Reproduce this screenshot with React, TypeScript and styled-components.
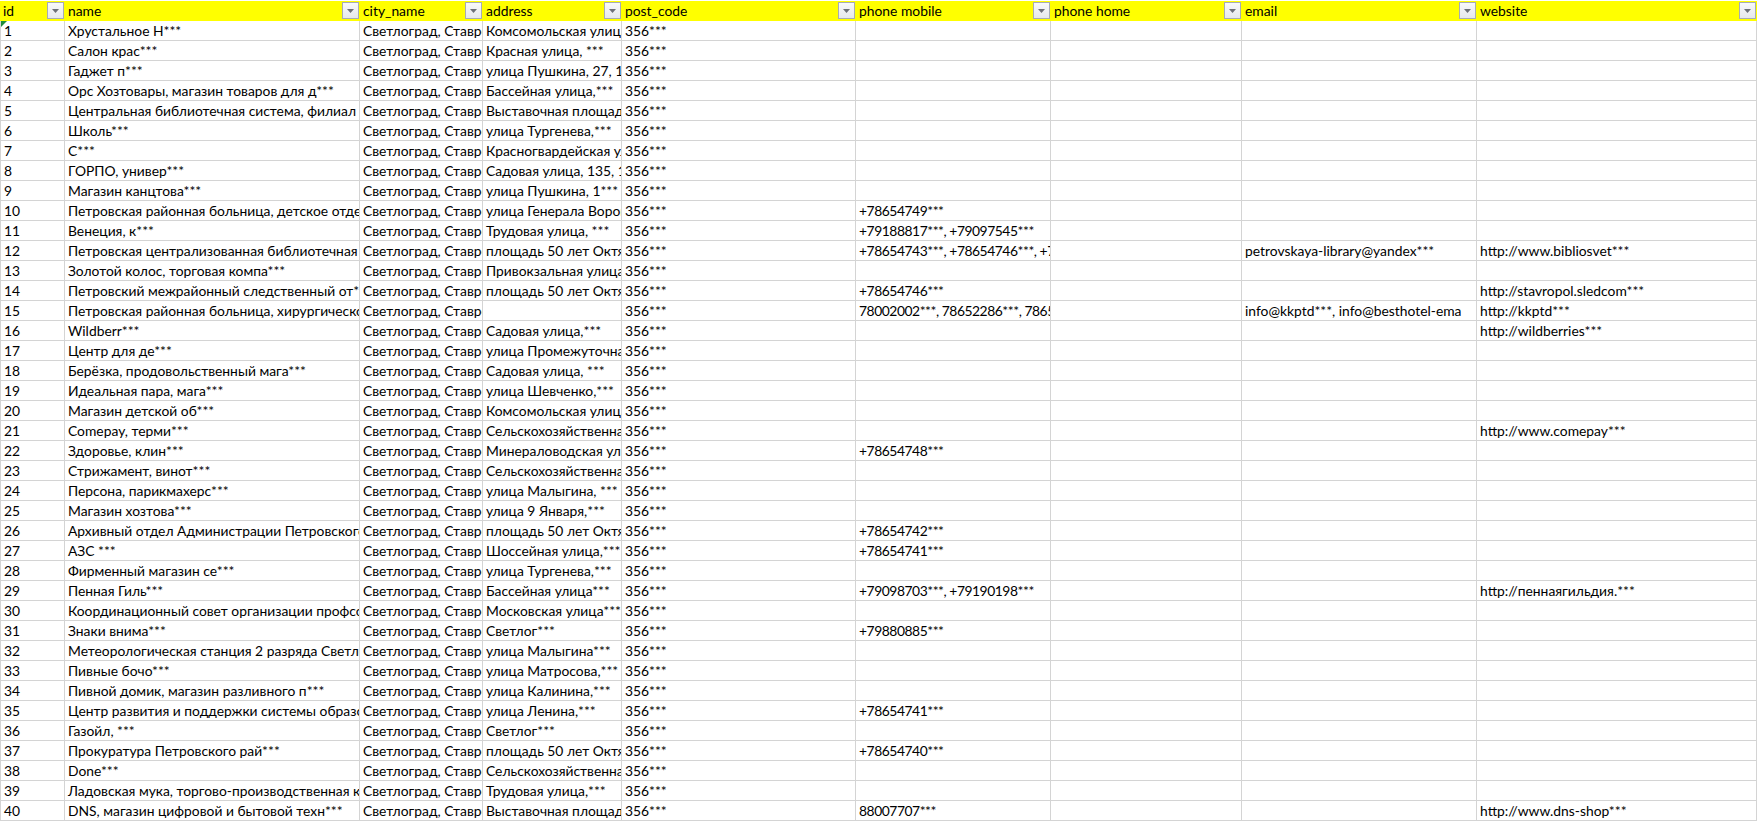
import React from 'react';
import styled, { createGlobalStyle } from 'styled-components';

const GlobalStyle = createGlobalStyle`
    html, body {
        margin: 0;
        padding: 0;
        background: #ffffff;
        overflow: hidden;
    }
`;

const columns = [
    { key: 'id', title: 'id', width: 65 },
    { key: 'name', title: 'name', width: 295 },
    { key: 'city', title: 'city_name', width: 123 },
    { key: 'address', title: 'address', width: 139 },
    { key: 'post', title: 'post_code', width: 234 },
    { key: 'mobile', title: 'phone mobile', width: 195 },
    { key: 'home', title: 'phone home', width: 191 },
    { key: 'email', title: 'email', width: 235 },
    { key: 'website', title: 'website', width: 280 },
];

const CITY = 'Светлоград, Ставропольский край';
const POST = '356***';

// name, address, mobile, email, website
const rows: string[][] = [
    ['Хрустальное Н***', 'Комсомольская улица'],
    ['Салон крас***', 'Красная улица, ***'],
    ['Гаджет п***', 'улица Пушкина, 27, 1'],
    ['Орс Хозтовары, магазин товаров для д***', 'Бассейная улица,***'],
    ['Центральная библиотечная система, филиал №***', 'Выставочная площадь'],
    ['Школь***', 'улица Тургенева,***'],
    ['С***', 'Красногвардейская улица'],
    ['ГОРПО, универ***', 'Садовая улица, 135, 1'],
    ['Магазин канцтова***', 'улица Пушкина, 1***'],
    ['Петровская районная больница, детское отделение', 'улица Генерала Воронова', '+78654749***'],
    ['Венеция, к***', 'Трудовая улица, ***', '+79188817***, +79097545***'],
    ['Петровская централизованная библиотечная система', 'площадь 50 лет Октября', '+78654743***, +78654746***, +78654747***', 'petrovskaya-library@yandex***', 'http://www.bibliosvet***'],
    ['Золотой колос, торговая компа***', 'Привокзальная улица'],
    ['Петровский межрайонный следственный от***', 'площадь 50 лет Октября', '+78654746***', '', 'http://stavropol.sledcom***'],
    ['Петровская районная больница, хирургическое отделение', '', '78002002***, 78652286***, 78652287***', 'info@kkptd***, info@besthotel-ema', 'http://kkptd***'],
    ['Wildberr***', 'Садовая улица,***', '', '', 'http://wildberries***'],
    ['Центр для де***', 'улица Промежуточная'],
    ['Берёзка, продовольственный мага***', 'Садовая улица, ***'],
    ['Идеальная пара, мага***', 'улица Шевченко,***'],
    ['Магазин детской об***', 'Комсомольская улица'],
    ['Comepay, терми***', 'Сельскохозяйственная', '', '', 'http://www.comepay***'],
    ['Здоровье, клин***', 'Минераловодская улица', '+78654748***'],
    ['Стрижамент, винот***', 'Сельскохозяйственная'],
    ['Персона, парикмахерс***', 'улица Малыгина, ***'],
    ['Магазин хозтова***', 'улица 9 Января,***'],
    ['Архивный отдел Администрации Петровского района', 'площадь 50 лет Октября', '+78654742***'],
    ['АЗС ***', 'Шоссейная улица,***', '+78654741***'],
    ['Фирменный магазин се***', 'улица Тургенева,***'],
    ['Пенная Гиль***', 'Бассейная улица***', '+79098703***, +79190198***', '', 'http://пеннаягильдия.***'],
    ['Координационный совет организации профсоюзов', 'Московская улица***'],
    ['Знаки внима***', 'Светлог***', '+79880885***'],
    ['Метеорологическая станция 2 разряда Светлоград', 'улица Малыгина***'],
    ['Пивные бочо***', 'улица Матросова,***'],
    ['Пивной домик, магазин разливного п***', 'улица Калинина,***'],
    ['Центр развития и поддержки системы образования', 'улица Ленина,***', '+78654741***'],
    ['Газойл, ***', 'Светлог***'],
    ['Прокуратура Петровского рай***', 'площадь 50 лет Октября', '+78654740***'],
    ['Done***', 'Сельскохозяйственная'],
    ['Ладовская мука, торгово-производственная компания', 'Трудовая улица,***'],
    ['DNS, магазин цифровой и бытовой техн***', 'Выставочная площадь', '88007707***', '', 'http://www.dns-shop***'],
];

const Sheet = styled.table`
    border-collapse: separate;
    border-spacing: 0;
    table-layout: fixed;
    width: 1757px;
    font-family: 'Lato', 'Open Sans', sans-serif;
    font-size: 13.85px;
    color: #000000;
`;

const HeadCell = styled.th`
    position: relative;
    height: 21px;
    padding: 1px 0 0;
    box-sizing: border-box;
    font-weight: 400;
    text-align: left;
    white-space: nowrap;
    overflow: hidden;
`;

const HeadLabel = styled.span`
    display: block;
    height: 20px;
    line-height: 20px;
    padding-left: 3px;
    background: #ffff00;
`;

const FilterButton = styled.span`
    position: absolute;
    top: 2px;
    right: 1px;
    width: 17px;
    height: 17px;
    box-sizing: border-box;
    border: 1px solid #a6abb5;
    background: linear-gradient(#f8f9fa, #e6e8ec);
    display: flex;
    align-items: center;
    justify-content: center;
`;

const Cell = styled.td<{ $digits?: boolean }>`
    position: relative;
    box-sizing: border-box;
    height: 20px;
    padding: 0 0 0 3px;
    border-right: 1px solid #d4d4d4;
    border-bottom: 1px solid #d4d4d4;
    white-space: nowrap;
    overflow: hidden;
    line-height: 19px;
    letter-spacing: ${({ $digits }) => ($digits ? '-0.45px' : 'normal')};

    &:first-child {
        border-left: 1px solid #d4d4d4;
    }
`;

const ErrorMark = styled.span`
    position: absolute;
    top: 0;
    left: 0;
    width: 0;
    height: 0;
    border-top: 6px solid #1e8b3c;
    border-right: 6px solid transparent;
`;

const App: React.FC = () => (
    <>
        <GlobalStyle />
        <Sheet>
            <colgroup>
                {columns.map(c => (
                    <col key={c.key} width={c.width} />
                ))}
            </colgroup>
            <thead>
                <tr>
                    {columns.map(c => (
                        <HeadCell key={c.key}>
                            <HeadLabel>{c.title}</HeadLabel>
                            <FilterButton>
                                <svg width="7" height="4" viewBox="0 0 7 4">
                                    <path d="M0 0h7L3.500 4z" fill="#6d7078" />
                                </svg>
                            </FilterButton>
                        </HeadCell>
                    ))}
                </tr>
            </thead>
            <tbody>
                {rows.map((r, i) => (
                    <tr key={i}>
                        <Cell>
                            {i === 0 && <ErrorMark />}
                            {i + 1}
                        </Cell>
                        <Cell>{r[0]}</Cell>
                        <Cell>{CITY}</Cell>
                        <Cell>{r[1]}</Cell>
                        <Cell>{POST}</Cell>
                        <Cell $digits>{r[2]}</Cell>
                        <Cell />
                        <Cell>{r[3]}</Cell>
                        <Cell>{r[4]}</Cell>
                    </tr>
                ))}
            </tbody>
        </Sheet>
    </>
);

export default App;
